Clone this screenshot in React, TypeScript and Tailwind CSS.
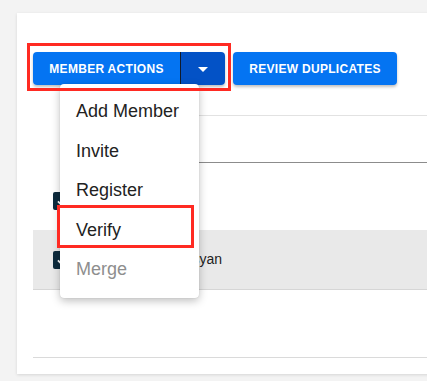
import React from "react";

const menuItems = ["Add Member", "Invite", "Register", "Verify"];

function Check() {
  return (
    <span className="flex h-[18px] w-[18px] items-center justify-center rounded-[2px] bg-[#0d2b3d]">
      <svg width="14" height="14" viewBox="0 0 24 24" fill="none" stroke="white" strokeWidth="3">
        <path d="M5 12.5l4.5 4.5L19 7.5" />
      </svg>
    </span>
  );
}

function SplitButton() {
  return (
    <div className="flex h-[33px] rounded-[4px] shadow-[0_2px_3px_rgba(0,0,0,0.25)]">
      <button className="w-[147px] rounded-l-[4px] bg-[#0474f2] text-[12px] font-bold tracking-[0.3px] text-white">
        MEMBER ACTIONS
      </button>
      <div className="w-px bg-[#111a2a]" />
      <button className="flex w-[44px] items-center justify-center rounded-r-[4px] bg-[#0352c6]">
        <svg width="24" height="24" viewBox="0 0 24 24" fill="white">
          <path d="M7 10l5 5 5-5z" />
        </svg>
      </button>
    </div>
  );
}

export default function App() {
  return (
    <div
      className="h-[381px] w-full overflow-hidden bg-[#f3f3f3] pl-[17px] pt-[13px]"
      style={{ fontFamily: '"Liberation Sans", Arial, sans-serif' }}
    >
      <div className="relative h-[361px] w-[440px] bg-white px-[16px] pt-[39px] shadow-[0_1px_3px_rgba(0,0,0,0.12)]">
        <div className="flex gap-2">
          <SplitButton />
          <button className="h-[33px] w-[164px] rounded-[4px] bg-[#0474f2] text-[12px] font-bold tracking-[0.3px] text-white shadow-[0_2px_3px_rgba(0,0,0,0.25)]">
            REVIEW DUPLICATES
          </button>
        </div>

        <div className="ml-[60px] mt-[30px] h-[48px] border-y border-t-[#e2e2e2] border-b-[#8c8c8c]" />

        <div className="flex h-[67px] items-start pl-[20px] pt-[29px]">
          <Check />
        </div>
        <div className="flex h-[60px] items-center border-b border-[#d6d6d6] bg-[#e9e9e9] pl-[20px] text-[14px] text-[#222]">
          <Check />
          <span className="ml-[88px]">Petrosyan</span>
        </div>

        <div className="mt-[67px] border-t border-[#dadada]" />

        <div className="absolute left-[43px] top-[71px] w-[139px] rounded-[4px] bg-white py-2 shadow-[0_3px_8px_rgba(0,0,0,0.25),0_0_1px_rgba(0,0,0,0.2)]">
          {menuItems.map((m) => (
            <div key={m} className="flex h-[39.5px] items-center px-4 text-[18px] text-[#222]">
              {m}
            </div>
          ))}
          <div className="flex h-[39.5px] items-center px-4 text-[18px] text-[#8e8e8e]">Merge</div>
        </div>

        <div className="absolute left-[10px] top-[30px] h-[48px] w-[204px] border-[3px] border-[#ff2a22]" />
        <div className="absolute left-[40px] top-[192px] h-[43px] w-[137px] border-[3px] border-[#ff2a22]" />
      </div>
    </div>
  );
}
